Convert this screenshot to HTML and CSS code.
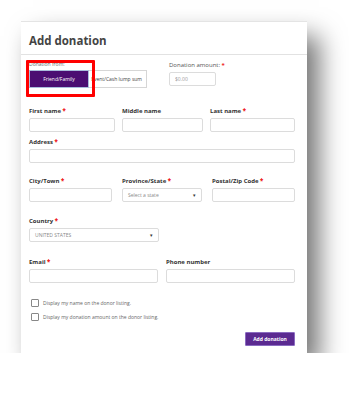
FILE: index.html
```html
<!DOCTYPE html>
<html lang="en">
<head>
  <meta charset="UTF-8" />
  <title>Add donation</title>
  <link rel="stylesheet" href="styles.css">
</head>
<body>
  <div class="card">
    <div class="card-head">Add donation</div>
    <form class="card-body">
      <div class="row-top">
        <div class="from">
          <span class="from-label">Donation from:</span>
          <div class="toggle">
            <button type="button" class="tbtn active">Friend/Family</button>
            <button type="button" class="tbtn other"><span>Event/Cash lump sum</span></button>
          </div>
          <span class="highlight"></span>
        </div>
        <div class="amount">
          <span class="amount-label">Donation amount: <b class="req">*</b></span>
          <input class="field amount-input" placeholder="$0.00">
        </div>
      </div>

      <div class="grid3 names">
        <div><label>First name <b class="req">*</b></label><input class="field"></div>
        <div><label>Middle name</label><input class="field"></div>
        <div><label>Last name <b class="req">*</b></label><input class="field"></div>
      </div>

      <div class="address">
        <label>Address <b class="req">*</b></label><input class="field">
      </div>

      <div class="grid3 city">
        <div><label>City/Town <b class="req">*</b></label><input class="field"></div>
        <div><label>Province/State <b class="req">*</b></label><div class="field select">Select a state<span class="caret">&#9662;</span></div></div>
        <div><label>Postal/Zip Code <b class="req">*</b></label><input class="field"></div>
      </div>

      <div class="country">
        <label>Country <b class="req">*</b></label>
        <div class="field select">UNITED STATES<span class="caret">&#9662;</span></div>
      </div>

      <div class="grid2 contact">
        <div><label>Email <b class="req">*</b></label><input class="field"></div>
        <div><label>Phone number</label><input class="field"></div>
      </div>

      <div class="checks">
        <div class="check"><span class="box"></span>Display my name on the donor listing.</div>
        <div class="check"><span class="box"></span>Display my donation amount on the donor listing.</div>
      </div>

      <div class="actions">
        <button type="button" class="submit">Add donation</button>
      </div>
    </form>
  </div>
</body>
</html>
```

FILE: styles.css
```css
body {
  margin: 0;
  background: #fff;
  font-family: 'Open Sans', Arial, sans-serif;
  color: #333;
}
.card {
  margin: 21px 0 0 21px;
  width: 286px;
  height: 332px;
  background: #fff;
  border-top: 1px solid #e4e4e4;
  box-sizing: border-box;
  box-shadow: 12px 15px 24px rgba(0,0,0,0.55);
}
.card-head {
  height: 32px;
  line-height: 37px;
  padding-left: 8px;
  font-size: 11.5px;
  font-weight: 700;
  color: #444;
  border-bottom: 1px solid #e2e2e2;
}
.card-body {
  padding: 0 12px 0 8px;
}
.row-top {
  display: flex;
  height: 43px;
}
.from {
  position: relative;
  width: 140px;
}
.from-label {
  display: block;
  font-size: 5px;
  color: #666;
  line-height: 6px;
  margin-top: 6px;
}
.toggle {
  display: flex;
  margin-top: 3px;
}
.tbtn {
  height: 18px;
  padding: 0;
  font-family: inherit;
  font-size: 5px;
  box-sizing: border-box;
}
.tbtn.active {
  width: 60px;
  background: #4b0e72;
  color: #fff;
  border: 1px solid #a9bedc;
}
.tbtn.other {
  width: 58px;
  background: #fff;
  color: #444;
  border: 1px solid #d6d6d6;
  border-left: none;
  overflow: hidden;
  display: flex;
  align-items: center;
  justify-content: flex-end;
  padding-right: 4px;
  white-space: nowrap;
}
.highlight {
  position: absolute;
  left: -3px;
  top: 5px;
  width: 69px;
  height: 37px;
  border: 3px solid #f00;
  border-radius: 1px;
  box-sizing: border-box;
}
.amount .amount-label {
  display: block;
  font-size: 6px;
  color: #555;
  line-height: 8px;
  margin-top: 6px;
}
label {
  display: block;
  font-size: 6px;
  font-weight: 700;
  color: #333;
  line-height: 8px;
  margin-bottom: 3px;
}
.req {
  color: #e22;
}
.field {
  display: block;
  width: 100%;
  height: 14px;
  box-sizing: border-box;
  border: 1px solid #dcdcdc;
  border-radius: 2px;
  background: #fff;
  font-family: inherit;
  font-size: 5px;
  padding: 0 5px;
  margin: 0;
  color: #777;
}
.field::placeholder {
  color: #999;
}
.amount .amount-input {
  width: 47px;
  margin-top: 3px;
}
.select {
  display: flex;
  align-items: center;
  justify-content: space-between;
  color: #888;
}
.caret {
  font-size: 5px;
  color: #333;
}
.grid3 {
  display: grid;
  grid-template-columns: 86px 81px 85px;
  column-gap: 7px;
}
.names {
  margin-top: 9px;
}
.address {
  margin-top: 6px;
}
.city {
  margin-top: 14px;
  grid-template-columns: 83px 80px 83px;
  column-gap: 10px;
}
.country {
  margin-top: 15px;
  width: 130px;
}
.grid2 {
  display: grid;
  grid-template-columns: 129px 129px;
  column-gap: 8px;
}
.contact {
  margin-top: 16px;
}
.checks {
  margin-top: 16px;
  padding-left: 2px;
}
.check {
  display: flex;
  align-items: center;
  height: 7px;
  margin-bottom: 7px;
  font-size: 5px;
  color: #666;
}
.box {
  width: 6px;
  height: 6px;
  border: 1px solid #888;
  border-radius: 1px;
  margin-right: 4px;
  background: #fff;
}
.actions {
  display: flex;
  justify-content: flex-end;
  margin-top: 12px;
}
.submit {
  width: 50px;
  height: 14px;
  padding: 0;
  background: #5b2a91;
  color: #fff;
  border: 1px solid #8a6bc0;
  border-radius: 1px;
  font-family: inherit;
  font-size: 5px;
  font-weight: 700;
}
```
